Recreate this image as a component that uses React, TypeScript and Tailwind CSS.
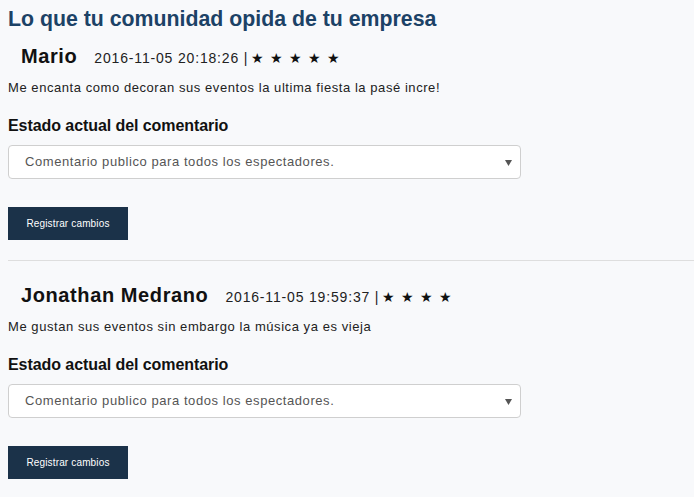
import React from "react";

type Review = {
  name: string;
  date: string;
  stars: number;
  text: string;
};

const REVIEWS: Review[] = [
  {
    name: "Mario",
    date: "2016-11-05 20:18:26",
    stars: 5,
    text: "Me encanta como decoran sus eventos la ultima fiesta la pasé incre!",
  },
  {
    name: "Jonathan Medrano",
    date: "2016-11-05 19:59:37",
    stars: 4,
    text: "Me gustan sus eventos sin embargo la música ya es vieja",
  },
];

function ReviewBlock({ review }: { review: Review }) {
  return (
    <div>
      <div className="flex items-baseline pl-[13px] leading-[24px] text-[#111]">
        <span className="text-[20px] font-bold tracking-[0.6px]">
          {review.name}
        </span>
        <span className="ml-[17px] text-[14px] tracking-[0.83px] text-[#222]">
          {review.date} |
        </span>
        <span className="ml-[3px] flex text-[14px] text-[#111]">
          {Array.from({ length: review.stars }).map((_, i) => (
            <span key={i} className="w-[19px]">
              ★
            </span>
          ))}
        </span>
      </div>
      <p className="mt-[9px] text-[13px] leading-[18px] tracking-[0.56px] text-[#222]">
        {review.text}
      </p>
      <p className="mt-[19px] text-[16px] font-bold leading-[20px] tracking-[-0.07px] text-[#111]">
        Estado actual del comentario
      </p>
      <div className="mt-[9px] flex h-[34px] w-[513px] items-center justify-between rounded-[4px] border border-[#cfcfcf] bg-white pl-[16px] pr-[8px]">
        <span className="text-[13px] tracking-[0.57px] text-[#555]">
          Comentario publico para todos los espectadores.
        </span>
        <svg width="7" height="6" viewBox="0 0 7 6" className="mt-[1px]">
          <path d="M0 0h7L3.5 6z" fill="#555" />
        </svg>
      </div>
      <button className="mt-[28px] flex h-[33px] w-[120px] items-center justify-center bg-[#1b3249] text-[10px] tracking-[0.15px] text-white">
        Registrar cambios
      </button>
      <div className="mt-[20px] h-px bg-[#dedede]" />
    </div>
  );
}

export default function App() {
  return (
    <div
      className="min-h-[497px] bg-[#f8f9fb] pl-2"
      style={{ fontFamily: '"Liberation Sans", Arial, sans-serif' }}
    >
      <h1 className="pt-[6px] text-[21.3px] font-bold leading-[26px] text-[#1c4266]">
        Lo que tu comunidad opida de tu empresa
      </h1>
      <div className="mt-[12px] flex flex-col gap-[22px]">
        {REVIEWS.map((r) => (
          <ReviewBlock key={r.name} review={r} />
        ))}
      </div>
    </div>
  );
}
